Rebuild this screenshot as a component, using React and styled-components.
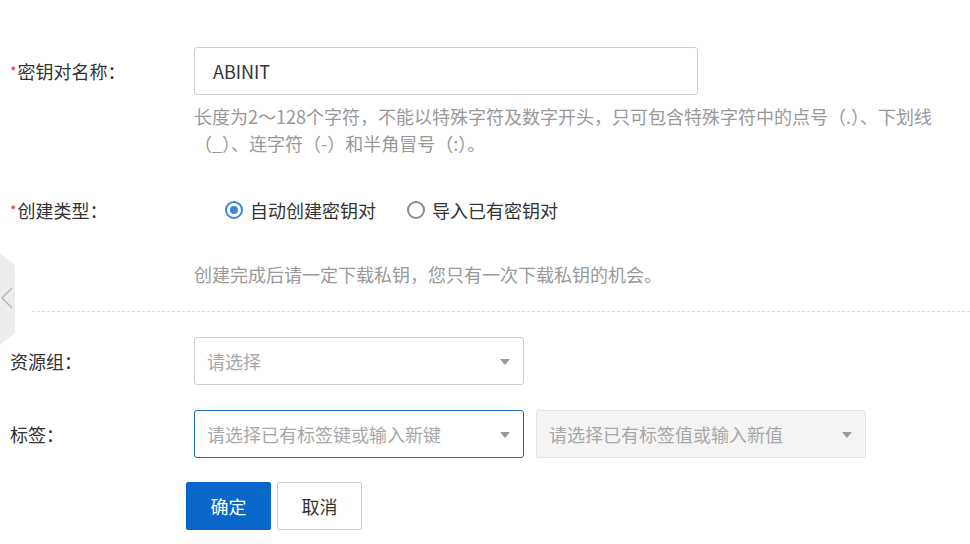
import React from "react";
import styled, { createGlobalStyle } from "styled-components";

const Global = createGlobalStyle`
  html, body { margin: 0; padding: 0; background: #fff; }
  body {
    font-family: "Noto Sans CJK SC", "Noto Sans", sans-serif;
    font-size: 18px;
    color: #333;
    width: 970px;
    height: 544px;
    overflow: hidden;
  }
  * { box-sizing: border-box; }
`;

const Page = styled.div`
  position: relative;
  width: 970px;
  height: 544px;
  padding: 47px 0 0 10px;
`;

const Form = styled.div`
  display: flex;
  flex-direction: column;
`;

const Row = styled.div`
  display: flex;
  align-items: flex-start;
  margin-top: ${(p) => p.$mt || 0}px;
`;

const Label = styled.div`
  width: 184px;
  flex: none;
  height: 48px;
  line-height: 48px;
  color: #333;
  white-space: nowrap;
`;

const Star = styled.span`
  color: #e0393e;
  font-size: 14px;
  vertical-align: 2px;
  margin-right: 1px;
`;

const Control = styled.div`
  display: flex;
  flex-direction: column;
  flex: 1;
  min-width: 0;
`;

const TextInput = styled.div`
  width: 504px;
  height: 48px;
  border: 1px solid #cfcfcf;
  border-radius: 3px;
  padding: 0 18px;
  line-height: 46px;
  color: #333;
`;

const Hint = styled.div`
  margin-top: ${(p) => p.$mt || 0}px;
  color: #999;
  line-height: 27px;
  white-space: nowrap;
`;

const RadioGroup = styled.div`
  display: flex;
  align-items: center;
  height: 48px;
  padding-left: 31px;
  gap: 31px;
`;

const RadioItem = styled.label`
  display: flex;
  align-items: center;
  gap: 7px;
  color: #333;
`;

const RadioCircle = styled.span`
  width: 18px;
  height: 18px;
  border-radius: 50%;
  border: 2px solid ${(p) => (p.$checked ? "#3c86df" : "#8a8a8a")};
  display: flex;
  align-items: center;
  justify-content: center;
  &::after {
    content: "";
    width: 8px;
    height: 8px;
    border-radius: 50%;
    background: ${(p) => (p.$checked ? "#3c86df" : "transparent")};
  }
`;

const Divider = styled.div`
  margin: 23px 0 0 22px;
  border-top: 1px dashed #dcdcdc;
`;

const Selects = styled.div`
  display: flex;
  gap: 12px;
`;

const Select = styled.div`
  width: 330px;
  height: 48px;
  border: 1px solid ${(p) => (p.$focus ? "#1e6bb8" : p.$disabled ? "#e3e3e3" : "#cfcfcf")};
  background: ${(p) => (p.$disabled ? "#f4f4f4" : "#fff")};
  border-radius: 3px;
  display: flex;
  align-items: center;
  justify-content: space-between;
  padding: 0 13px 0 12px;
  color: #a8a8a8;
`;

const Caret = styled.span`
  width: 0;
  height: 0;
  border-left: 5px solid transparent;
  border-right: 5px solid transparent;
  border-top: 6px solid #9a9a9a;
  margin-top: 2px;
`;

const Buttons = styled.div`
  display: flex;
  gap: 6px;
  margin-top: 24px;
  padding-left: 176px;
`;

const Button = styled.button`
  width: 85px;
  height: 48px;
  border-radius: 2px;
  font-family: inherit;
  font-size: 18px;
  cursor: pointer;
  border: 1px solid ${(p) => (p.$primary ? "#0868c9" : "#cccccc")};
  background: ${(p) => (p.$primary ? "#0868c9" : "#fff")};
  color: ${(p) => (p.$primary ? "#fff" : "#333")};
`;

const SideToggle = styled.div`
  position: absolute;
  left: 0;
  top: 253px;
  width: 16px;
  height: 92px;
`;

export default function App() {
  return (
    <Page>
      <Global />
      <SideToggle>
        <svg width="16" height="92" viewBox="0 0 16 92">
          <polygon points="0,0 15,12 15,80 0,92" fill="#ececec" />
          <polyline points="12,35 2,45 12,55" fill="none" stroke="#b5b5b5" strokeWidth="1.4" />
        </svg>
      </SideToggle>
      <Form>
        <Row>
          <Label>
            <Star>*</Star>密钥对名称：
          </Label>
          <Control>
            <TextInput>ABINIT</TextInput>
            <Hint $mt={8}>
              长度为2～128个字符，不能以特殊字符及数字开头，只可包含特殊字符中的点号（.）、下划线
              <br />
              （_）、连字符（-）和半角冒号（:）。
            </Hint>
          </Control>
        </Row>
        <Row $mt={29}>
          <Label>
            <Star>*</Star>创建类型：
          </Label>
          <Control>
            <RadioGroup>
              <RadioItem>
                <RadioCircle $checked />
                自动创建密钥对
              </RadioItem>
              <RadioItem>
                <RadioCircle />
                导入已有密钥对
              </RadioItem>
            </RadioGroup>
            <Hint $mt={27}>创建完成后请一定下载私钥，您只有一次下载私钥的机会。</Hint>
          </Control>
        </Row>
        <Divider />
        <Row $mt={25}>
          <Label>资源组：</Label>
          <Control>
            <Select>
              请选择
              <Caret />
            </Select>
          </Control>
        </Row>
        <Row $mt={25}>
          <Label>标签：</Label>
          <Control>
            <Selects>
              <Select $focus>
                请选择已有标签键或输入新键
                <Caret />
              </Select>
              <Select $disabled>
                请选择已有标签值或输入新值
                <Caret />
              </Select>
            </Selects>
          </Control>
        </Row>
        <Buttons>
          <Button $primary>确定</Button>
          <Button>取消</Button>
        </Buttons>
      </Form>
    </Page>
  );
}
